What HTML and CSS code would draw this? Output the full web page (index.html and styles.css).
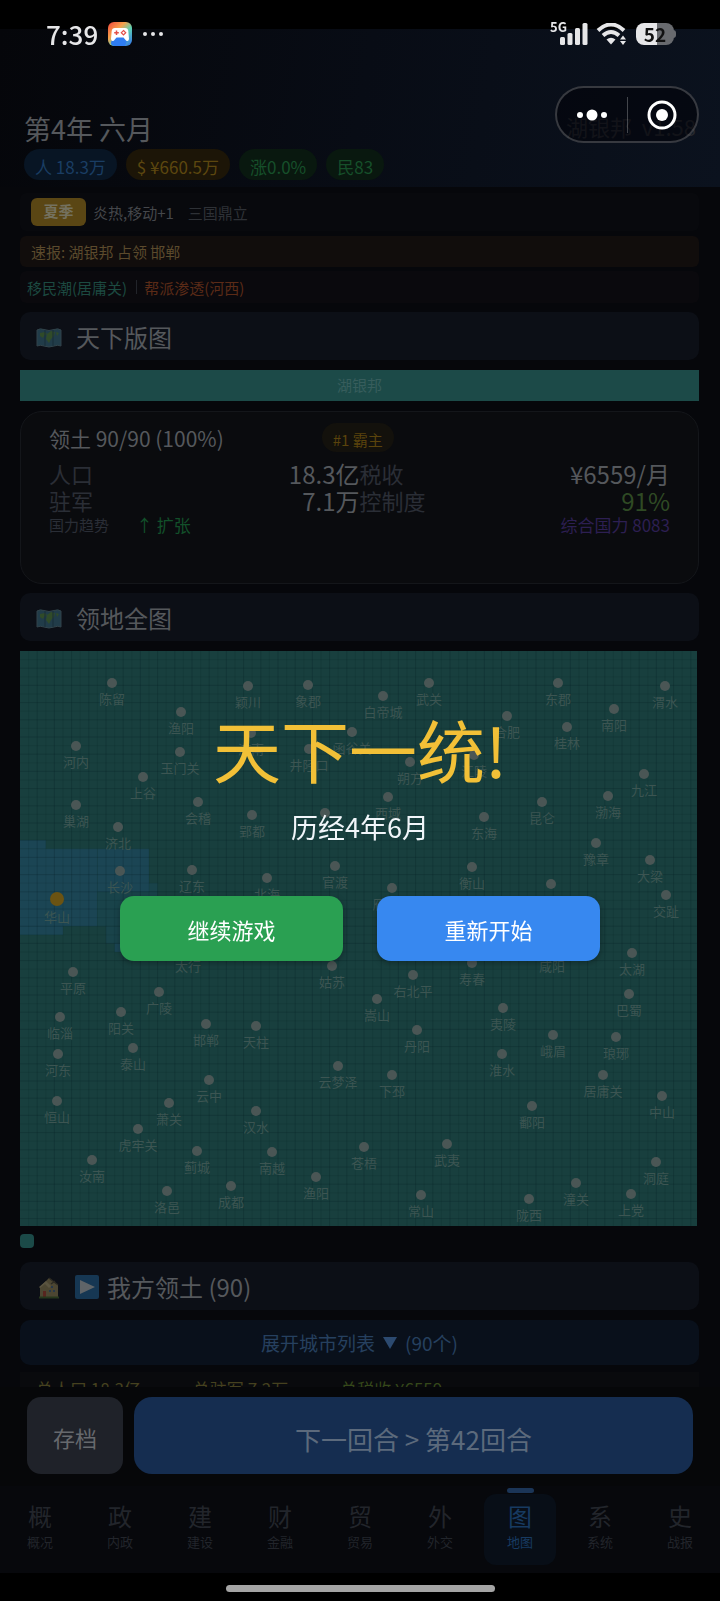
FILE: index.html
```html
<!DOCTYPE html>
<html lang="zh-CN">
<head>
  <meta charset="UTF-8" />
  <meta name="viewport" content="width=device-width, initial-scale=1.0"/>
  <title>天下版图</title>
  <link rel="stylesheet" href="styles.css">
</head>
<body>
  <div class="status-bar">
    <div class="status-left">
      <span class="clock">7:39</span>
      <svg class="app-icon" viewBox="0 0 24 24" aria-hidden="true">
        <defs>
          <linearGradient id="rainbow" x1="0" y1="0" x2="1" y2="1">
            <stop offset="0" stop-color="#f0443c"/>
            <stop offset="0.35" stop-color="#f6a04a"/>
            <stop offset="0.6" stop-color="#5fd0b0"/>
            <stop offset="1" stop-color="#2f6df0"/>
          </linearGradient>
        </defs>
        <rect width="24" height="24" rx="6" fill="url(#rainbow)"/>
        <path d="M4 18 L9 15 H16 L19 19 L17 24 H6 Q1 23 4 18Z" fill="#2f7df2"/>
        <path d="M7 6 H17 Q20 6 20.300 9 L21 17 Q20.500 20 18 18.500 L15.500 15.500 H8.500 L6 18.500 Q3.500 20 3 17 L3.700 9 Q4 6 7 6Z" fill="#fff"/>
        <path d="M8.500 8.500 V13 M6.200 10.700 H10.800" stroke="#e2504a" stroke-width="1.500"/>
        <path d="M15.500 8.500 L17.700 10.700 L15.500 13 L13.300 10.700Z" fill="none" stroke="#e2504a" stroke-width="1.200"/>
      </svg>
      <svg class="more-dots" viewBox="0 0 20 4" aria-hidden="true"><circle cx="2" cy="2" r="2"/><circle cx="10" cy="2" r="2"/><circle cx="18" cy="2" r="2"/></svg>
    </div>
    <div class="status-right">
      <div class="signal">
        <span>5G</span>
        <svg viewBox="0 0 28 22" aria-hidden="true"><rect x="0" y="14" width="5" height="8" rx="1.500"/><rect x="7.500" y="10" width="5" height="12" rx="1.500"/><rect x="15" y="5" width="5" height="17" rx="1.500"/><rect x="22.500" y="0" width="5" height="22" rx="1.500"/></svg>
      </div>
      <svg class="wifi" viewBox="0 0 32 22" aria-hidden="true">
        <path d="M2 7.500 Q15 -4.500 28 7.500" fill="none" stroke="#e6e6e8" stroke-width="4"/>
        <path d="M7 12.500 Q15 5.500 23 12.500" fill="none" stroke="#e6e6e8" stroke-width="4"/>
        <path d="M10.500 16.500 Q15 13 19.500 16.500 L15 21.500Z"/>
        <path d="M24 16.500 L27 12.500 L30 16.500Z M24 18 L27 22 L30 18Z"/>
      </svg>
      <div class="battery"><span>52</span></div>
    </div>
  </div>

  <div class="app">
    <header class="header">
      <div class="header-row">
        <h1>第4年 六月</h1>
        <span class="version">湖银邦&nbsp; v1.58</span>
      </div>
      <div class="chips">
        <span class="chip blue">人 18.3万</span>
        <span class="chip gold">$ ¥660.5万</span>
        <span class="chip green">涨0.0%</span>
        <span class="chip green">民83</span>
      </div>
    </header>

    <main class="content">
      <div class="season"><span class="season-tag">夏季</span><span>炎热,移动+1</span><span class="era">三国鼎立</span></div>
      <div class="news">速报: 湖银邦 占领 邯郸</div>
      <div class="events"><span class="good">移民潮(居庸关)</span><i></i><span class="bad">帮派渗透(河西)</span></div>

      <h2 class="section-title">
        <svg class="map-icon" viewBox="0 0 26 20" aria-hidden="true"><use href="#world-map"/></svg>
        天下版图
      </h2>
      <div class="power-bar">湖银邦</div>

      <section class="card">
        <div class="card-head"><h3>领土 90/90 (100%)</h3><span class="rank">#1 霸主</span></div>
        <dl class="stats">
          <div><dt>人口</dt><dd>18.3亿</dd></div>
          <div><dt>税收</dt><dd>¥6559/月</dd></div>
          <div><dt>驻军</dt><dd>7.1万</dd></div>
          <div><dt>控制度</dt><dd class="control">91%</dd></div>
        </dl>
        <div class="trend"><span>国力趋势</span><span class="up">↑ 扩张</span><span class="total-power">综合国力 8083</span></div>
      </section>

      <h2 class="section-title">
        <svg class="map-icon" viewBox="0 0 26 20" aria-hidden="true">
          <g id="world-map">
            <path d="M1 2 Q4 0 8 1.500 Q13 3.500 18 1.500 Q22 0 25 2 V18 Q22 16.500 18 18 Q13 20 8 18 Q4 16.500 1 18Z" fill="#213c49" stroke="#32434a" stroke-width="1"/>
            <path d="M4 5 L9 4 L11 6 L8 8 L7 10 L4 8Z M11 6 L15 3 L19 4 L18 8 L15 11 L13 15 L10 11Z M20 4 L23 5 L21 8Z" fill="#304b29"/>
            <path d="M9 2 V18 M17 2 V18" stroke="#182d38" stroke-width="1"/>
          </g>
        </svg>
        领地全图
      </h2>
      <svg id="map" class="map" viewBox="0 0 677 575" role="img" aria-label="领地全图"></svg>
      <div class="legend"></div>

      <h2 class="section-title">
        <svg class="house-icon" viewBox="0 0 20 22" aria-hidden="true">
          <path d="M1 20 V10 L6 5 L10 1 L19 8 V20Z" fill="#4c4632"/>
          <path d="M0 10 L7 4 L12 9 L10 11 L6 7 L1 11Z" fill="#5a5440"/>
          <path d="M10 1 L19 8 M12 7 L16 4" stroke="#2c2a22" stroke-width="1.500"/>
          <rect x="4" y="14" width="3" height="6" fill="#57251f"/>
          <path d="M10 13h2v2h-2z M14 13h2v2h-2z M12 9h2v2h-2z" fill="#27384a"/>
          <rect y="19.500" width="20" height="2" fill="#26371c"/>
        </svg>
        <svg class="play-icon" viewBox="0 0 24 24" aria-hidden="true"><rect width="24" height="24" rx="2" fill="#163753"/><path d="M5 5 L20 12 L5 19Z" fill="#5f6468"/></svg>
        我方领土 (90)
      </h2>
      <button class="expand">展开城市列表 <svg viewBox="0 0 14 14" aria-hidden="true"><path d="M0 1 H14 L7 13Z"/></svg> (90个)</button>
      <div class="totals"><span>总人口 18.3亿</span><span>总驻军 7.2万</span><span class="tax">总税收 ¥6559</span></div>
    </main>

    <div class="actions">
      <button class="save">存档</button>
      <button class="next">下一回合 &gt; 第42回合</button>
    </div>

    <nav class="tabs">
      <a href="#overview"><b>概</b>概况</a>
      <a href="#politics"><b>政</b>内政</a>
      <a href="#build"><b>建</b>建设</a>
      <a href="#finance"><b>财</b>金融</a>
      <a href="#trade"><b>贸</b>贸易</a>
      <a href="#diplomacy"><b>外</b>外交</a>
      <a href="#map" class="active"><b>图</b>地图</a>
      <a href="#system"><b>系</b>系统</a>
      <a href="#history"><b>史</b>战报</a>
    </nav>
    <div class="home-area"><div class="home-bar"></div></div>
  </div>

  <div class="victory" role="dialog" aria-labelledby="victory-title">
    <h2 id="victory-title">天下一统!</h2>
    <p>历经4年6月</p>
    <div class="victory-buttons">
      <button class="continue">继续游戏</button>
      <button class="restart">重新开始</button>
    </div>
  </div>

  <div class="capsule">
    <button aria-label="更多"><svg viewBox="0 0 32 12" aria-hidden="true"><circle cx="4" cy="6" r="3"/><circle cx="16" cy="6" r="5.500"/><circle cx="28" cy="6" r="3"/></svg></button>
    <button aria-label="关闭"><svg viewBox="0 0 32 32" aria-hidden="true"><circle cx="16" cy="16" r="13" fill="none" stroke="#fff" stroke-width="3"/><circle cx="16" cy="16" r="6"/></svg></button>
  </div>

  <script src="map.js"></script>
</body>
</html>
```

FILE: styles.css
```css
* {
  box-sizing: border-box;
}

body {
  margin: 0;
  background: #000;
  color: #55585c;
  font-family: "Noto Sans CJK SC", sans-serif;
}

h1, h2, h3, p, dl, dd {
  margin: 0;
  font-weight: 400;
}

button {
  font-family: inherit;
  border: none;
  padding: 0;
  cursor: pointer;
}

/* phone status bar */
.status-bar {
  position: fixed;
  top: 0;
  left: 0;
  right: 0;
  z-index: 3;
  display: flex;
  justify-content: space-between;
  align-items: center;
  height: 68px;
  padding: 0 46px;
  color: #e6e6e8;
  fill: #e6e6e8;
}

.status-left,
.status-right,
.signal {
  display: flex;
  align-items: center;
}

.clock {
  font-size: 26px;
  line-height: 32px;
  font-weight: 500;
}

.app-icon {
  width: 24px;
  height: 24px;
  margin: 0 11px 0 10px;
}

.more-dots {
  width: 20px;
  height: 4px;
}

.status-right {
  gap: 8px;
}

.signal {
  align-items: flex-start;
}

.signal span {
  font-size: 13px;
  line-height: 13px;
  font-weight: 700;
  margin-top: -3px;
  margin-right: -7px;
}

.signal svg {
  width: 28px;
  height: 22px;
}

.wifi {
  width: 32px;
  height: 22px;
}

.battery {
  position: relative;
  width: 38px;
  height: 22px;
  border-radius: 8px;
  background: linear-gradient(90deg, #e6e6e8 54%, #686a6e 54%);
  color: #111;
  font-size: 19px;
  line-height: 22px;
  font-weight: 700;
  text-align: center;
}

.battery::after {
  content: "";
  position: absolute;
  right: -2px;
  top: 7px;
  width: 3px;
  height: 8px;
  border-radius: 0 3px 3px 0;
  background: #686a6e;
}

/* page */
.app {
  display: flex;
  flex-direction: column;
  height: 100vh;
  padding-top: 29px;
  background: linear-gradient(#000 29px, #06070b 29px);
}

.header {
  height: 158px;
  padding: 81px 24px 0;
  background: linear-gradient(100deg, #05060a, #080c15 50%, #0b121e);
}

.header-row {
  display: flex;
  justify-content: space-between;
  height: 39px;
}

.header h1 {
  font-size: 27px;
  line-height: 38px;
}

.version {
  font-size: 22px;
  line-height: 32px;
  color: #25272c;
}

.chips {
  display: flex;
  gap: 9px;
}

.chip {
  height: 31px;
  padding: 0 11px;
  border-radius: 16px;
  font-size: 17px;
  line-height: 35px;
}

.chip.blue { background: #081524; color: #1a3d63; }
.chip.gold { background: #1c1507; color: #5c470f; }
.chip.green { background: #09180f; color: #164f2a; }

.content {
  flex: 1;
  min-height: 0;
  overflow: hidden;
  padding: 6px 21px 0 20px;
}

.season,
.news,
.events {
  display: flex;
  align-items: center;
  font-size: 15px;
  border-radius: 6px;
}

.season {
  height: 38px;
  gap: 7px;
  padding: 0 11px;
  background: #08090d;
  color: #45474b;
}

.season-tag {
  width: 55px;
  height: 28px;
  border-radius: 6px;
  background: #5a4614;
  color: #74715f;
  line-height: 26px;
  font-weight: 700;
  text-align: center;
}

.era {
  margin-left: 7px;
  color: #2e3136;
}

.news {
  height: 31px;
  margin-top: 5px;
  padding: 0 11px;
  background: #110d0c;
  color: #5b4a2c;
}

.events {
  height: 32px;
  margin-top: 4px;
  padding: 0 7px;
  background: #0a090d;
}

.events .good { color: #1c4a41; }
.events .bad { color: #5b2b17; }

.events i {
  width: 1px;
  height: 14px;
  margin: 0 7px 0 9px;
  background: #22242a;
}

.section-title {
  display: flex;
  align-items: center;
  height: 48px;
  margin: 9px 0 10px;
  padding: 0 16px;
  border-radius: 10px;
  background: #0c0f16;
  font-size: 24px;
}

.map-icon {
  width: 26px;
  height: 20px;
  margin: 4px 14px 0 0;
}

.power-bar {
  height: 31px;
  background: #1c4a48;
  color: #375d5c;
  font-size: 15px;
  line-height: 30px;
  text-align: center;
}

.card {
  height: 173px;
  margin-top: 10px;
  padding: 11px 28px;
  border: 1px solid #14161a;
  border-radius: 22px;
  background: #0a0b0e;
}

.card-head {
  display: flex;
  gap: 98px;
  height: 37px;
}

.card-head h3 {
  font-size: 21px;
  line-height: 30px;
}

.rank {
  height: 29px;
  padding: 0 11px;
  border-radius: 15px;
  background: #13110c;
  color: #5a430c;
  font-size: 15px;
  line-height: 33px;
}

.stats {
  display: grid;
  grid-template-columns: 1fr 1fr;
}

.stats div {
  display: flex;
  justify-content: space-between;
  line-height: 27px;
}

.stats dt {
  font-size: 22px;
  color: #2a2e36;
}

.stats dd {
  font-size: 24px;
}

.stats .control { color: #2f4a24; }

.trend {
  display: flex;
  align-items: center;
  height: 20px;
  font-size: 15px;
  color: #2a2e36;
}

.trend .up {
  margin-left: 27px;
  font-size: 17px;
  color: #12502a;
}

.trend .total-power {
  margin-left: auto;
  font-size: 17px;
  color: #2d1f52;
}

.map {
  display: block;
  width: 100%;
  padding-right: 2px;
}

.map .land { fill: #183f3e; }
.map .city { fill: #4a5655; }
.map .capital { fill: #6b5312; }

.map text {
  font-size: 13px;
  text-anchor: middle;
  fill: #3c5552;
}

.map .river { fill: #1b4554; }
.map .shore { fill: #19434a; }

.legend {
  width: 14px;
  height: 14px;
  margin: 8px 0 14px;
  border-radius: 4px;
  background: #1b4a48;
}

.house-icon {
  width: 20px;
  height: 22px;
  margin: 4px 16px 0 3px;
}

.play-icon {
  width: 24px;
  height: 24px;
  margin: 2px 8px 0 0;
}

.expand {
  display: flex;
  align-items: center;
  justify-content: center;
  gap: 8px;
  width: 100%;
  height: 45px;
  border-radius: 10px;
  background: #09101b;
  color: #26405f;
  font-size: 19px;
}

.expand svg {
  width: 14px;
  height: 14px;
  fill: #2c4a70;
}

.totals {
  display: flex;
  gap: 52px;
  height: 40px;
  margin-top: 7px;
  padding: 5px 16px;
  background: #090a0d;
  color: #45411f;
  font-size: 17px;
  line-height: 24px;
}

.totals .tax { color: #35471a; }

.actions {
  display: flex;
  gap: 11px;
  padding: 10px 27px 12px;
  background: #060709;
}

.actions button {
  height: 77px;
  padding-top: 2px;
  border-radius: 14px;
  color: #66696d;
}

.save {
  flex: 0 0 96px;
  background: #1f2229;
  font-size: 22px;
}

.actions .next {
  flex: 1;
  padding-top: 5px;
  border-radius: 18px;
  background: #152d50;
  color: #5c6a7c;
  font-size: 26px;
}

.tabs {
  display: grid;
  grid-template-columns: repeat(9, 1fr);
  height: 87px;
  padding-top: 8px;
  background: #07080c;
}

.tabs a {
  position: relative;
  display: block;
  height: 71px;
  margin: 0 4px;
  border-radius: 12px;
  color: #22252b;
  font-size: 13px;
  line-height: 18px;
  text-align: center;
  text-decoration: none;
}

.tabs b {
  display: block;
  padding-top: 4px;
  font-size: 24px;
  line-height: 35px;
  font-weight: 400;
}

.tabs .active {
  background: #080e17;
  color: #173a61;
}

.tabs .active::before {
  content: "";
  position: absolute;
  top: -6px;
  left: 50%;
  width: 27px;
  height: 5px;
  margin-left: -13px;
  border-radius: 3px;
  background: #1b3557;
}

.home-area {
  height: 28px;
  padding-top: 12px;
  background: #000;
}

.home-bar {
  width: 269px;
  height: 7px;
  margin: 0 auto;
  border-radius: 4px;
  background: #a5a5a5;
}

/* victory dialog */
.victory {
  position: fixed;
  inset: 0;
  z-index: 2;
  display: flex;
  flex-direction: column;
  align-items: center;
  justify-content: center;
  padding-top: 70px;
}

.victory h2 {
  color: #f2c037;
  font-size: 68px;
  line-height: 76px;
}

.victory p {
  margin: 20px 0 49px;
  color: #f1f6fa;
  font-size: 27px;
  line-height: 40px;
}

.victory-buttons {
  display: flex;
  justify-content: center;
  gap: 34px;
  width: 100%;
  padding: 0 120px;
}

.victory-buttons button {
  flex: 1;
  height: 65px;
  padding-top: 2px;
  border-radius: 14px;
  color: #fff;
  font-size: 22px;
  box-shadow: 0 2px 6px rgba(0, 0, 0, 0.3);
}

.continue { background: #2aa052; }
.restart { background: #3788f0; }

/* mini program capsule */
.capsule {
  position: fixed;
  top: 86px;
  right: 21px;
  z-index: 3;
  display: flex;
  align-items: center;
  width: 144px;
  height: 57px;
  border: 2px solid rgba(255, 255, 255, 0.2);
  border-radius: 29px;
  background: rgba(0, 0, 5, 0.5);
}

.capsule button {
  flex: 1;
  display: flex;
  align-items: center;
  justify-content: center;
  height: 36px;
  background: none;
}

.capsule button + button {
  border-left: 1px solid rgba(255, 255, 255, 0.25);
}

.capsule svg {
  width: 32px;
  fill: #fff;
}
```

FILE: map.js
```js
const CELL = 8.6;
const WIDTH = 677;
const HEIGHT = 575;

// name, x, y
const cities = [
  ['陈留', 92, 32], ['颖川', 228, 35], ['象郡', 288, 34], ['白帝城', 363, 45],
  ['武关', 409, 32], ['东郡', 538, 32], ['渭水', 645, 35], ['渔阳', 161, 61],
  ['合肥', 487, 65], ['桂林', 547, 76], ['南阳', 594, 58], ['河内', 56, 95],
  ['玉门关', 160, 101], ['济南', 231, 82], ['井陉口', 289, 98], ['函谷关', 332, 81],
  ['朔方', 390, 111], ['江陵', 454, 104], ['上谷', 123, 126], ['巢湖', 56, 154],
  ['会稽', 178, 151], ['郢都', 232, 164], ['', 305, 162], ['西域', 368, 146],
  ['东海', 464, 166], ['昆仑', 522, 151], ['渤海', 588, 145], ['九江', 624, 123],
  ['济北', 98, 176], ['豫章', 576, 192], ['大梁', 630, 209], ['交趾', 646, 244],
  ['长沙', 100, 220], ['辽东', 172, 219], ['北海', 247, 227], ['官渡', 315, 215],
  ['雁门关', 372, 237], ['衡山', 452, 216], ['', 531, 233], ['太行', 168, 299],
  ['平原', 53, 321], ['姑苏', 312, 315], ['右北平', 393, 324], ['寿春', 452, 312],
  ['咸阳', 532, 299], ['太湖', 612, 302], ['广陵', 139, 341], ['阳关', 101, 361],
  ['临淄', 40, 366], ['嵩山', 357, 348], ['巴蜀', 609, 343], ['夷陵', 483, 357],
  ['河东', 38, 403], ['泰山', 113, 397], ['邯郸', 186, 373], ['天柱', 236, 375],
  ['丹阳', 397, 379], ['峨眉', 533, 384], ['琅琊', 596, 386], ['淮水', 482, 403],
  ['云中', 189, 429], ['云梦泽', 318, 415], ['下邳', 372, 424], ['居庸关', 583, 424],
  ['恒山', 37, 450], ['萧关', 149, 452], ['汉水', 236, 460], ['中山', 642, 445],
  ['鄱阳', 512, 455], ['虎牢关', 118, 478], ['蓟城', 177, 500], ['南越', 252, 501],
  ['苍梧', 344, 496], ['武夷', 427, 493], ['汝南', 72, 509], ['洞庭', 636, 511],
  ['渔阳', 296, 526], ['成都', 211, 535], ['洛邑', 147, 540], ['潼关', 556, 532],
  ['常山', 401, 544], ['陇西', 509, 548], ['上党', 611, 543]
];

// class, col, row, cols, rows
const waters = [
  ['river', 0, 22, 3, 1], ['river', 0, 23, 9, 9], ['river', 0, 32, 5, 1],
  ['river', 9, 23, 6, 5], ['shore', 9, 28, 7, 4], ['shore', 15, 27, 1, 1],
  ['shore', 10, 32, 6, 2], ['river', 11, 34, 6, 1]
];

let svg = `<rect class="land" width="${WIDTH}" height="${HEIGHT}"/>`;
waters.forEach(([type, x, y, w, h]) => {
  svg += `<rect class="${type}" x="${x * CELL}" y="${y * CELL}" width="${w * CELL}" height="${h * CELL}"/>`;
});

function line(i, d) {
  const opacity = i % 2 ? 0.1 : 0.2;
  return `<path d="${d}" stroke="#021a1c" stroke-opacity="${opacity}"/>`;
}

for (let i = 1; i * CELL < WIDTH; i++) svg += line(i, `M${i * CELL} 0V${HEIGHT}`);
for (let i = 1; i * CELL < HEIGHT; i++) svg += line(i, `M0 ${i * CELL}H${WIDTH}`);

cities.forEach(([name, x, y]) => {
  svg += `<circle class="city" cx="${x}" cy="${y}" r="5"/>`;
  if (name) svg += `<text x="${x}" y="${y + 21}">${name}</text>`;
});
svg += '<circle class="capital" cx="37" cy="248" r="7"/><text x="37" y="271">华山</text>';

document.getElementById('map').innerHTML = svg;
```
